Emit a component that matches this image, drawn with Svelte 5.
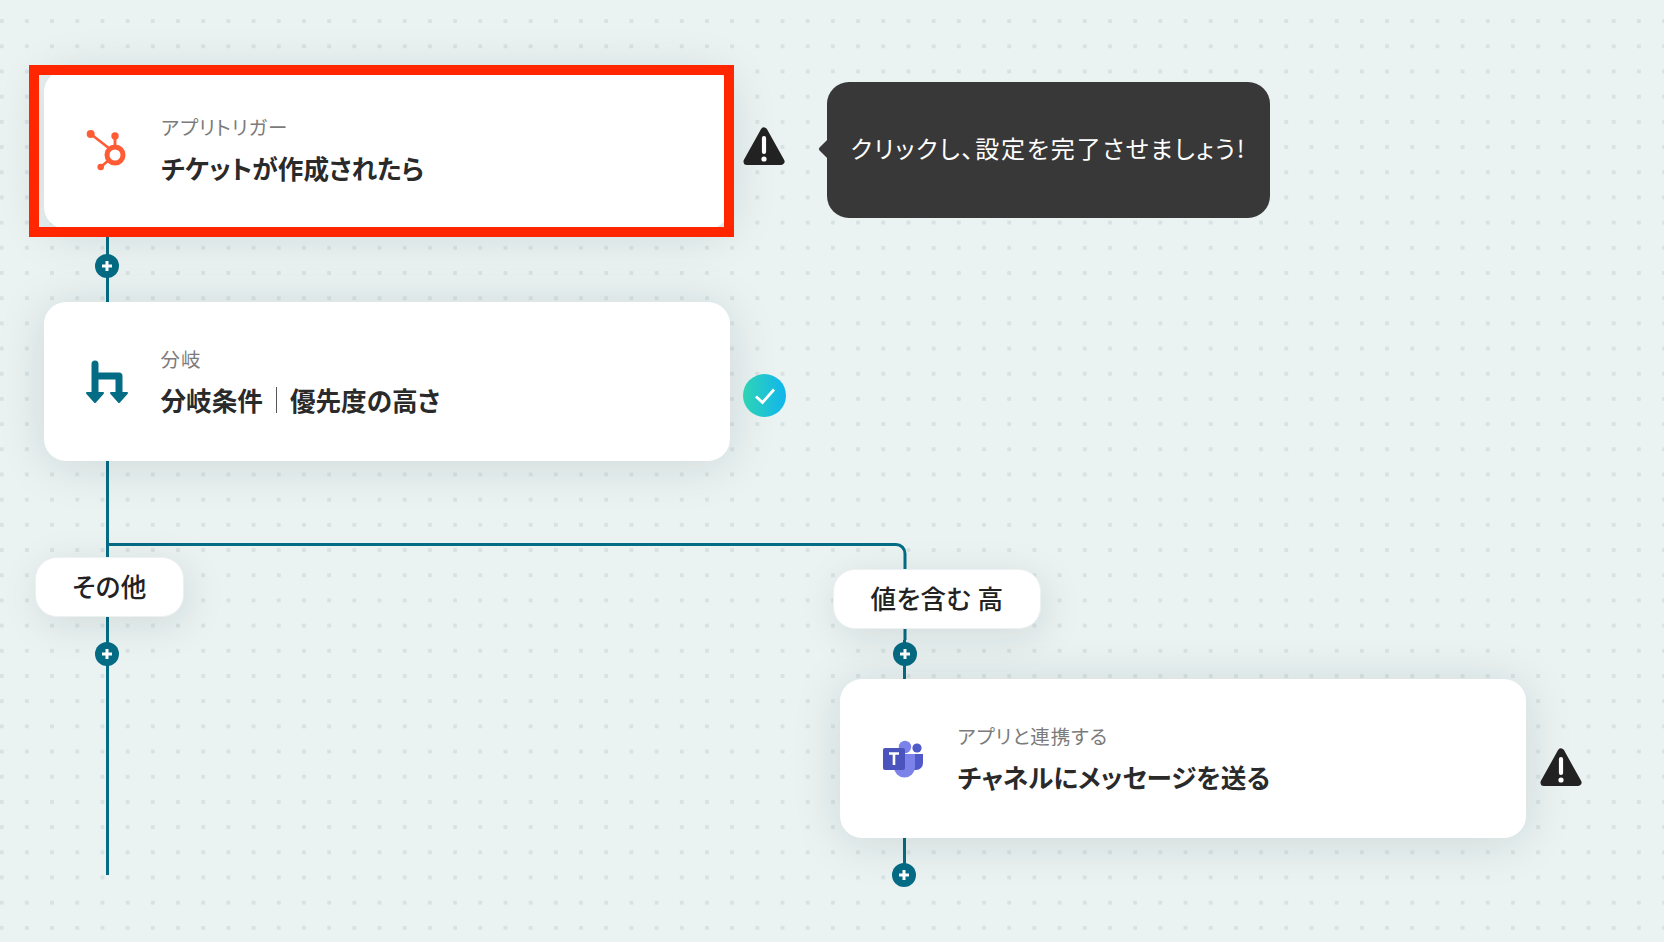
<script>
  // plus buttons sitting on the connector lines
  const pluses = [
    { x: 107, y: 266 },
    { x: 107, y: 654 },
    { x: 905, y: 654 },
    { x: 904, y: 875 }
  ];
</script>

<div class="canvas">
  <svg class="lines" width="1664" height="942" viewBox="0 0 1664 942">
    <path d="M107.5 229V875" />
    <path d="M107.5 544.5H896a9 9 0 0 1 9 9V640" />
    <path d="M904.5 640V680" />
    <path d="M904.5 838V875" />
    {#each pluses as p}
      <circle class="plus-bg" cx={p.x} cy={p.y} r="12" />
      <path class="plus" d="M{p.x - 5} {p.y}H{p.x + 5}M{p.x} {p.y - 5}V{p.y + 5}" />
    {/each}
  </svg>

  <div class="node card trigger">
    <div class="icon">
      <svg width="44" height="44" viewBox="0 0 44 44">
        <g fill="#ff5c35" stroke="none">
          <circle cx="5.7" cy="6" r="4" />
          <circle cx="30" cy="8" r="3.7" />
          <circle cx="15.7" cy="39" r="3.3" />
        </g>
        <g stroke="#ff5c35" fill="none">
          <path d="M5.7 6L25 21" stroke-width="2.6" />
          <path d="M30 8V20" stroke-width="2.8" />
          <path d="M15.7 39L24 32" stroke-width="2.8" />
          <circle cx="30" cy="27" r="8" stroke-width="5" />
        </g>
      </svg>
    </div>
    <div class="text">
      <div class="label">アプリトリガー</div>
      <div class="title">チケットが作成されたら</div>
    </div>
  </div>
  <div class="node highlight"></div>

  <svg class="node warn warn-top" width="42" height="40" viewBox="0 0 42 40">
    <path d="M21 4L38 34.500H4Z" fill="#222" stroke="#222" stroke-width="7" stroke-linejoin="round" />
    <path d="M21 11V25" stroke="#fff" stroke-width="4.2" stroke-linecap="round" />
    <circle cx="21" cy="32" r="2.6" fill="#fff" />
  </svg>

  <div class="node tooltip">クリックし、設定を完了させましょう!</div>

  <div class="node card branch">
    <div class="icon">
      <svg width="44" height="44" viewBox="0 0 44 44">
        <path d="M10 4V34M10 16H34V34" fill="none" stroke="#056c85" stroke-width="7" stroke-linecap="round" stroke-linejoin="round" />
        <path d="M2 33H18L10 42Z M26 33H42L34 42Z" fill="#056c85" stroke="#056c85" stroke-width="2" stroke-linejoin="round" />
      </svg>
    </div>
    <div class="text">
      <div class="label">分岐</div>
      <div class="title">分岐条件<span class="sep"></span>優先度の高さ</div>
    </div>
  </div>

  <div class="node check">
    <svg width="22" height="18" viewBox="0 0 22 18">
      <path d="M2 9.500L8.500 15.500L20 2.500" fill="none" stroke="#fff" stroke-width="2.800" />
    </svg>
  </div>

  <div class="node pill pill-other">その他</div>
  <div class="node pill pill-high">値を含む 高</div>

  <div class="node card teams">
    <div class="icon">
      <svg width="44" height="44" viewBox="0 0 44 44">
        <circle cx="36" cy="11" r="4.6" fill="#5059c9" />
        <path d="M29 17H42V26a7 7 0 0 1-7 7H29Z" fill="#5059c9" />
        <circle cx="24" cy="10" r="6.2" fill="#7b83eb" />
        <path d="M13 17H34V30a10.5 10.5 0 0 1-21 0Z" fill="#7b83eb" />
        <rect x="2" y="11" width="22" height="22" rx="2" fill="#4b53bc" />
        <path d="M8 16.5H18M13 16.5V28" stroke="#fff" stroke-width="2.6" fill="none" />
      </svg>
    </div>
    <div class="text">
      <div class="label">アプリと連携する</div>
      <div class="title">チャネルにメッセージを送る</div>
    </div>
  </div>

  <svg class="node warn warn-bottom" width="42" height="40" viewBox="0 0 42 40">
    <path d="M21 4L38 34.500H4Z" fill="#222" stroke="#222" stroke-width="7" stroke-linejoin="round" />
    <path d="M21 11V25" stroke="#fff" stroke-width="4.2" stroke-linecap="round" />
    <circle cx="21" cy="32" r="2.6" fill="#fff" />
  </svg>
</div>

<style>
  :global(body) {
    margin: 0;
    background: #eaf2f2;
  }

  .canvas {
    position: relative;
    width: 1664px;
    height: 942px;
    overflow: hidden;
    background-color: #eaf2f2;
    background-image: radial-gradient(circle, #d8e2e2 2px, transparent 2.4px);
    background-size: 25.2px 25.2px;
    background-position: -10.9px 8.5px;
    font-family: "Noto Sans CJK JP", "Noto Sans", sans-serif;
    font-feature-settings: "palt";
    color: #222;
  }

  .lines {
    position: absolute;
    left: 0;
    top: 0;
  }
  .lines path {
    fill: none;
    stroke: #056c85;
    stroke-width: 3;
  }
  .lines .plus-bg {
    fill: #056c85;
  }
  .lines .plus {
    stroke: #fff;
    stroke-width: 3;
  }

  .node {
    position: absolute;
  }

  .card {
    display: flex;
    align-items: center;
    box-sizing: border-box;
    width: 686px;
    height: 159px;
    padding-left: 41px;
    gap: 32px;
    background: #fff;
    border-radius: 22px;
    box-shadow: 0 4px 50px rgba(0, 30, 30, 0.12);
  }
  .icon {
    display: flex;
    width: 44px;
    height: 44px;
  }
  .text {
    display: flex;
    flex-direction: column;
    gap: 9.5px;
  }
  .label {
    font-size: 19.5px;
    line-height: 27px;
    letter-spacing: 0.9px;
    color: #7b7b7b;
  }
  .title {
    font-size: 25.6px;
    line-height: 36px;
    font-weight: 700;
    color: #2a2a2a;
    display: flex;
    align-items: center;
  }
  .sep {
    width: 1px;
    height: 26px;
    margin: 0 13px;
    background: #555;
  }

  .trigger {
    left: 44px;
    top: 70px;
  }
  .branch {
    left: 43.5px;
    top: 302px;
  }
  .teams {
    left: 839.5px;
    top: 679px;
    gap: 33px;
  }

  .highlight {
    left: 29px;
    top: 65px;
    width: 705px;
    height: 172px;
    box-sizing: border-box;
    border: 10px solid #ff2600;
  }

  .warn-top {
    left: 743px;
    top: 127px;
  }
  .warn-bottom {
    left: 1540px;
    top: 748px;
  }

  .check {
    left: 743px;
    top: 374px;
    width: 43px;
    height: 43px;
    border-radius: 50%;
    display: flex;
    align-items: center;
    justify-content: center;
    background: linear-gradient(90deg, #2fd4b4, #11b5ee);
  }

  .tooltip {
    left: 827px;
    top: 82px;
    width: 443px;
    height: 136px;
    box-sizing: border-box;
    display: flex;
    align-items: center;
    justify-content: center;
    padding-bottom: 5px;
    background: #383838;
    border-radius: 22px;
    color: #fff;
    font-size: 24px;
    letter-spacing: 1.8px;
    white-space: nowrap;
  }
  .tooltip::before {
    content: "";
    position: absolute;
    left: -6px;
    top: 60px;
    width: 14px;
    height: 14px;
    background: #383838;
    transform: rotate(45deg);
    border-radius: 2px;
  }

  .pill {
    display: flex;
    align-items: center;
    justify-content: center;
    box-sizing: border-box;
    height: 60px;
    padding-bottom: 4px;
    background: #fff;
    border: 1px solid #eef1f1;
    border-radius: 22px;
    font-size: 25.6px;
    font-weight: 500;
    letter-spacing: 0.4px;
    box-shadow: 4px 8px 40px rgba(0, 30, 30, 0.1);
    white-space: nowrap;
  }
  .pill-other {
    left: 35px;
    top: 557px;
    width: 149px;
  }
  .pill-high {
    left: 833px;
    top: 569px;
    width: 208px;
  }
</style>
